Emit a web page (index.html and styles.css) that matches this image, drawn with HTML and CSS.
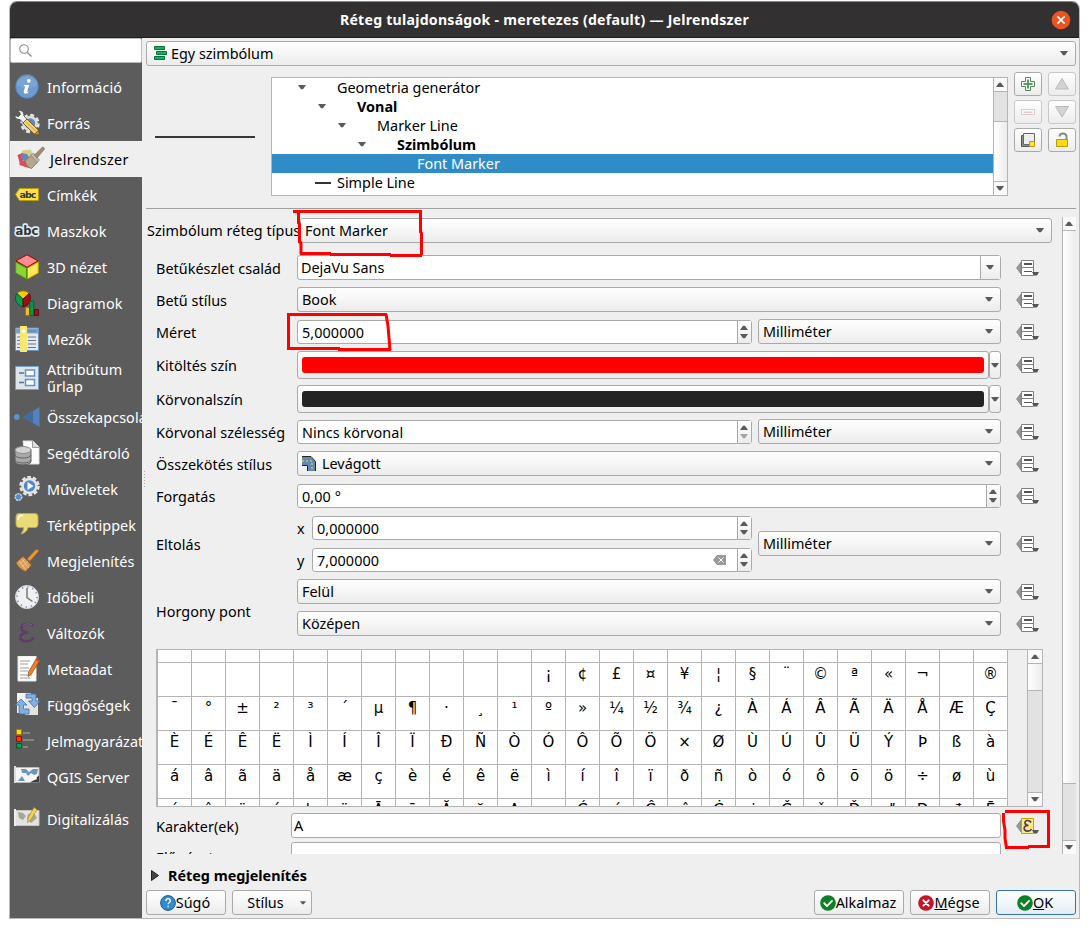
FILE: index.html
```html
<!DOCTYPE html>
<html lang="hu">
<head>
<meta charset="utf-8">
<title>Réteg tulajdonságok</title>
<link rel="stylesheet" href="styles.css">
</head>
<body>
<svg width="0" height="0" class="defs">
  <defs>
    <symbol id="down" viewBox="0 0 8 5"><path d="M0 0h8L5 4.2H3z" fill="#5b5b5b"/></symbol>
    <symbol id="up" viewBox="0 0 8 5"><path d="M0 5h8L5 .8H3z" fill="#5b5b5b"/></symbol>
    <symbol id="override" viewBox="0 0 23 16">
      <path d="M5 2.2V14L.6 8z" fill="#999" stroke="#808080" stroke-width=".8"/>
      <path d="M5.5.5h12v15h-12z" fill="#fff" stroke="#808080"/>
      <path d="M5 7.500h13" stroke="#808080"/><path d="M8 4h8" stroke="#555" stroke-width="2"/><path d="M8 11.5h8" stroke="#555"/>
      <path d="M16 12h7l-2 3.4h-3z" fill="#555"/>
    </symbol>
    <symbol id="ok" viewBox="0 0 16 16"><circle cx="8" cy="8" r="7.8" fill="#0d7f24"/><path d="M4.2 8.2l2.8 2.9 5-5.2" fill="none" stroke="#fff" stroke-width="1.9" stroke-linecap="round" stroke-linejoin="round"/></symbol>
  </defs>
</svg>
<div class="window">
  <header class="titlebar">
    <span class="title">Réteg tulajdonságok - meretezes (default) — Jelrendszer</span>
    <svg class="close" width="20" height="20" viewBox="0 0 20 20"><circle cx="10" cy="10" r="9.3" fill="#e95420"/><path d="M6.4 6.4l7.2 7.2m0-7.2l-7.2 7.2" stroke="#fff" stroke-width="1.6"/></svg>
  </header>
  <div class="body">
    <nav class="sidebar">
      <div class="search"><svg width="13" height="13" viewBox="0 0 13 13" fill="none" stroke="#8b8b8b"><circle cx="5" cy="5" r="4.3" stroke-width="1.1"/><path d="M8.2 8.2l4.3 4.3" stroke-width="1.3"/></svg></div>
      <div class="items">
        <div class="item"><svg width="26" height="26" viewBox="0 0 26 26"><circle cx="13" cy="13" r="11.4" fill="#6d9bd1" stroke="#4a78b5"/><path d="M2 11a11 11 0 0 1 22 0c-7 4-14 4-22 0z" fill="#8fb2dd" opacity=".4"/><circle cx="14.8" cy="6.8" r="1.9" fill="#fff"/><path d="M10.2 11h4.9l-2 7c.6.4 1.6-.3 2.2-1.1-.8 2.8-6.2 4.300-5.500.3l1.500-4.900h-1.700z" fill="#fff"/></svg><span>Információ</span></div>
        <div class="item"><svg width="26" height="26" viewBox="0 0 26 26"><circle cx="16" cy="13.500" r="8.500" fill="none" stroke="#e6e6e6" stroke-width="2.400" stroke-dasharray="3.900 2.775"/><circle cx="16" cy="13.500" r="6.500" fill="#5d89c0" stroke="#dcdcdc" stroke-width="2.600"/><path d="M3.500.5c4-.8 6.800 1.500 6.300 5.200l4.200 4.800-3.500 3.500-4.500-4.500C3.500 10 1 8.300.7 5.500l3.800 1 1.800-1.700-.6-2.600z" fill="#f2f2f2" stroke="#444" stroke-width=".8"/><path d="M9 13l4-4 11.500 11.300-4 4z" fill="#f2d27a" stroke="#6b5417" stroke-width=".9"/><path d="M12.500 12l9 9" stroke="#b58f3a" stroke-width=".8"/><path d="M20.500 24.300l4-4 .7 4.500z" fill="#bd9340" stroke="#6b5417" stroke-width=".6"/></svg><span>Forrás</span></div>
        <div class="item active"><svg width="30" height="26" viewBox="0 0 30 26"><path d="M6 5.500l9-1 2 6-5 2-6-2z" fill="#d9cd85"/><path d="M1.500 10l5-2 3 6-6 3z" fill="#d94857"/><path d="M5 8l6 1 3 5-5 3-4-4z" fill="#6688b9"/><path d="M3.500 15l7 1 5 6-3 1-9-3z" fill="#d9505c"/><path d="M9 15.500l7-5.500 6 7-6.500 6.500q-5-1-6.500-8z" fill="#b5a68f" stroke="#857453" stroke-width=".8"/><path d="M14.500 10l3-2 6 7-2.500 2.500z" fill="#bdb8aa" stroke="#807b70" stroke-width=".6"/><path d="M18.500 10l7.500-7.500c1-1 3.200.3 2.200 1.900L21 13z" fill="#a08d70" stroke="#7f7155" stroke-width=".7"/></svg><span>Jelrendszer</span></div>
        <div class="item"><svg width="26" height="26" viewBox="0 0 26 26"><path d="M1.500 12.500l4-6h19v12h-19z" fill="#fbe243" stroke="#b69b0c"/><text x="5.500" y="16" textLength="17" class="abc">abc</text></svg><span>Címkék</span></div>
        <div class="item"><svg width="26" height="26" viewBox="0 0 26 26"><text x="1.500" y="16.500" textLength="23" lengthAdjust="spacingAndGlyphs" class="abc mask">abc</text></svg><span>Maszkok</span></div>
        <div class="item"><svg width="26" height="26" viewBox="0 0 26 26" stroke-linejoin="round"><path d="M13 .8l11 6-11 6.500-11-6.500z" fill="#ff8e8f" stroke="#a40000"/><path d="M1.700 8l10.800 6v11L1.700 19z" fill="#89d537" stroke="#489500"/><path d="M24.300 8l-10.800 6v11l10.800-6z" fill="#fae759" stroke="#bd9a00"/></svg><span>3D nézet</span></div>
        <div class="item"><svg width="26" height="26" viewBox="0 0 26 26" stroke-width=".8"><path d="M9 9L3 3.500C6 0 12 0 15 3.500z" fill="#f7cd00" stroke="#a67d00"/><path d="M9 9L3 3.500C0 8 1 14 9 17z" fill="#0c9c50" stroke="#044f2a"/><path d="M9 9l6-5.500c4 5 0 12-6 13.500z" fill="#a40b15" stroke="#610007"/><path d="M11.500 17.500h4v8h-4z" fill="#ffbc13" stroke="#a76800"/><path d="M15.800 11h4v14.500h-4z" fill="#08964b" stroke="#02552a"/><path d="M20.500 19.500h4v6h-4z" fill="#9e1418" stroke="#5f0000"/></svg><span>Diagramok</span></div>
        <div class="item"><svg width="26" height="26" viewBox="0 0 26 26"><path d="M1.500 2h23v22.500h-23z" fill="#e3e9ee" stroke="#6d94bd"/><path d="M2 2.500h22v5H2z" fill="#7ca1cc"/><path d="M3 11h3m8 0h8M3 14.500h3m8 0h8M3 18h3m8 0h8M3 21.500h3m8 0h8M14 5h8" stroke="#607a92"/><path d="M6 0h7v26H6z" fill="#f7e871"/><circle cx="9.500" cy="5" r="1.800" fill="#fff"/></svg><span>Mezők</span></div>
        <div class="item tall"><svg width="26" height="26" viewBox="0 0 26 26"><path d="M1.500 1.500h23v23h-23z" fill="#dee5ea" stroke="#78a0c5"/><path d="M11.500 5h9v6h-9zm0 9.500h9v6h-9z" fill="#fff" stroke="#6991bd" stroke-width="1.500"/><path d="M5 8h5m-5 9.500h5" stroke="#54748d" stroke-width="1.700"/></svg><span>Attribútum<br>űrlap</span></div>
        <div class="item"><svg width="26" height="26" viewBox="0 0 26 26"><circle cx="2.800" cy="13" r="2.900" fill="#5e91cf"/><path d="M25.500 3v20L9 13z" fill="#5582b9"/><path d="M19 7v12l-10-6z" fill="#426ba5"/></svg><span>Összekapcsolás</span></div>
        <div class="item"><svg width="26" height="26" viewBox="0 0 26 26"><path d="M9 1h10l6 6v17H12z" fill="#fff" stroke="#ddd"/><path d="M18.500 1v6.500H25" fill="#ddd" stroke="#777" stroke-width=".7"/><path d="M1 9.500v12c0 4.500 16 4.500 16 0v-12z" fill="#a8a8a8" stroke="#626262"/><ellipse cx="9" cy="10" rx="8" ry="3.500" fill="#d2d2d2" stroke="#8b8b8b"/><path d="M1 15c0 4 16 4 16 0M1 20c0 4 16 4 16 0" fill="none" stroke="#646464"/></svg><span>Segédtároló</span></div>
        <div class="item"><svg width="26" height="26" viewBox="0 0 26 26"><circle cx="15.500" cy="10" r="9" fill="none" stroke="#e5e5e5" stroke-width="2.500" stroke-dasharray="3.700 2"/><circle cx="15.500" cy="10" r="7" fill="#5587c6" stroke="#e5e5e5" stroke-width="2.500"/><path d="M13.500 6l6 4-6 4z" fill="#fff"/><circle cx="4.500" cy="21" r="3.300" fill="#538bd0" stroke="#c9d5df" stroke-width="1.500" stroke-dasharray="2.200 .6"/></svg><span>Műveletek</span></div>
        <div class="item"><svg width="26" height="26" viewBox="0 0 26 26"><path d="M5 1.500h16q3 0 3 3v8q0 3-3 3h-7q-1 5-7 6.500 3-4 2.500-6.500H5q-3 0-3-3v-8q0-3 3-3z" fill="#eadb77" stroke="#bda848"/><path d="M4 8q0-5 5-4.500" stroke="#fff" stroke-width="1.500" fill="none"/></svg><span>Térképtippek</span></div>
        <div class="item"><svg width="26" height="26" viewBox="0 0 26 26"><path d="M13 11L21.500 2c1.500-1.500 4 .5 2.500 2L16 13z" fill="#ed9638" stroke="#b26514" stroke-width=".8"/><path d="M9 8.500l8.500 8.500-6 6.500Q5 21 2 15z" fill="#d99d57" stroke="#a16025" stroke-width=".8"/><path d="M5 13l7 9m-4-11l7 9m-9-4l5-5m-3 8l6-6" stroke="#f0c893" stroke-width=".8"/></svg><span>Megjelenítés</span></div>
        <div class="item"><svg width="26" height="26" viewBox="0 0 26 26"><circle cx="13" cy="13" r="11.500" fill="#eff0ef" stroke="#d6d6d6"/><circle cx="13" cy="13" r="10" fill="none" stroke="#6b95c6" stroke-width="1.700" stroke-dasharray="1.200 4.030"/><path d="M13 4v9.500l5.500 4" fill="none" stroke="#777" stroke-width="1.500"/></svg><span>Időbeli</span></div>
        <div class="item"><svg width="26" height="26" viewBox="0 0 26 26"><path d="M18.500 6.500C17.500 3 7 2 7.500 8.500q.7 3.500 6.500 4-8 .5-7.500 5C7 23 17.500 22 19.500 17.500" fill="none" stroke="#5f3b67" stroke-width="2.600"/><path d="M18 5Q12 2 9 6" fill="none" stroke="#82628b"/></svg><span>Változók</span></div>
        <div class="item"><svg width="26" height="26" viewBox="0 0 26 26"><path d="M4 0h18v25H4z" fill="#fff" stroke="#e2e2e2"/><path d="M6 5h10M6 8h8m-8 4h9m-9 3h8m-8 4h12m-12 3h10" stroke="#9b9b9b"/><path d="M22 3l3.500 2-8 13-3.500 2.500.5-4.500z" fill="#e8822c" stroke="#9b4b16" stroke-width=".7"/><path d="M21.500 3.500L23 2l3 2-1 1.700z" fill="#cf3f48"/></svg><span>Metaadat</span></div>
        <div class="item"><svg width="26" height="26" viewBox="0 0 26 26"><path d="M3 1h14v20H3z" fill="#f3f3f3"/><path d="M11 6h13v17H11z" fill="#e3e3e3"/><path d="M1 13l6-6 6 6H9.500v4H15v5H5v-9z" fill="#86b0dc" stroke="#3971ad" stroke-width=".8"/><path d="M12 2h10v7h4l-5.500 6.500L14.500 9H18V6h-6z" fill="#86b0dc" stroke="#3971ad" stroke-width=".8"/></svg><span>Függőségek</span></div>
        <div class="item"><svg width="26" height="26" viewBox="0 0 26 26"><path d="M2.500 1.500h5v5h-5z" fill="#ffd611" stroke="#a17c00"/><path d="M2.500 8.500h5v5h-5z" fill="#ff370c" stroke="#910c00"/><path d="M2.500 15.500h5v4.500h-5z" fill="#00a451" stroke="#005628"/><path d="M9 5h7m-7 7h11m-11 7h5" stroke="#929292" stroke-width="1.700"/></svg><span>Jelmagyarázat</span></div>
        <div class="item"><svg width="26" height="26" viewBox="0 0 26 26"><path d="M1 3.500h24v15H1z" fill="#f6f6f6" stroke="#bababa"/><path d="M7 5h5l3 3 4-3h5l-1 5-3 1-3-2-3 3-2-3-4 0zM4 17l4-5 3 5z" fill="#7095bc"/><path d="M16 18.500l9-7v7z" fill="#3b3d40"/><path d="M16 18l7-3-1-3-5 5z" fill="#fff"/><path d="M0 2h2v17H0z" fill="#dedede"/></svg><span>QGIS Server</span></div>
        <div class="item tall last"><svg width="26" height="26" viewBox="0 0 26 26"><path d="M1 6.500h24v15H1z" fill="#e3e3df" stroke="#c6c6c1"/><path d="M4 8l5 1 3 3-3 4-4-2zm10 2l6-1 3 5-6 5-4-4z" fill="#a4a59e"/><path d="M20 3.500l3 2-6 10-3.500 3 .8-5z" fill="#f4d64c" stroke="#a88c1d" stroke-width=".7"/><path d="M0 5h2v17H0z" fill="#eee"/></svg><span>Digitalizálás</span></div>
      </div>
    </nav>
    <main class="main">
      <div class="combo renderer"><svg width="13" height="15" viewBox="0 0 13 15" fill="#13b45d" stroke="#07713a"><path d="M.5.5h10v3H.5zM2.500 5.500h10v3h-10zM.5 10.500h10v3H.5z"/></svg><span>Egy szimbólum</span><svg class="arr" width="8" height="5"><use href="#down"/></svg></div>
      <section class="symbols">
        <div class="preview"><div class="stroke"></div></div>
        <div class="tree">
          <div class="nodes">
            <div class="node l0"><svg width="8" height="5"><use href="#down"/></svg><span>Geometria generátor</span></div>
            <div class="node l1"><svg width="8" height="5"><use href="#down"/></svg><b>Vonal</b></div>
            <div class="node l2"><svg width="8" height="5"><use href="#down"/></svg><span>Marker Line</span></div>
            <div class="node l3"><svg width="8" height="5"><use href="#down"/></svg><b>Szimbólum</b></div>
            <div class="node l4 selected"><span>Font Marker</span></div>
            <div class="node l5"><i class="dash"></i><span>Simple Line</span></div>
          </div>
          <div class="vbar"><div class="cap"><svg width="8" height="5"><use href="#up"/></svg></div><div class="groove short"></div><div class="thumb"></div><div class="cap"><svg width="8" height="5"><use href="#down"/></svg></div></div>
        </div>
        <div class="tools">
          <div class="tool"><svg width="16" height="16" viewBox="0 0 16 16"><path d="M5.500 1.500h5v4h4v5h-4v4h-5v-4h-4v-5h4z" fill="#fff" stroke="#4e8a55"/><path d="M7 3.500h2V7h3.500v2H9v3.500H7V9H3.500V7H7z" fill="#5c9a62"/></svg></div>
          <div class="tool off"><svg width="16" height="16" viewBox="0 0 16 16"><path d="M8 2.500l6.500 10.500h-13z" fill="#d3d3d3" stroke="#bbb"/></svg></div>
          <div class="tool off"><svg width="16" height="16" viewBox="0 0 16 16"><path d="M1.500 5.500h13v5h-13z" fill="#fff" stroke="#dfc7c7"/><path d="M3.500 7.500h9v1.500h-9z" fill="#e3c6c8"/></svg></div>
          <div class="tool off"><svg width="16" height="16" viewBox="0 0 16 16"><path d="M1.500 2.500h13L8 13z" fill="#d3d3d3" stroke="#bbb"/></svg></div>
          <div class="tool"><svg width="16" height="16" viewBox="0 0 16 16"><path d="M1.500 3.500h10v11h-10z" fill="#8b9082" stroke="#555"/><path d="M3.500 1.500h11v11h-11z" fill="#eee" stroke="#666"/><path d="M9.500 9.500h5v5h-5z" fill="#f7e05a" stroke="#c49a00"/></svg></div>
          <div class="tool"><svg width="16" height="16" viewBox="0 0 16 16"><path d="M5.500 4.500Q5.500 1.500 9 1.500T12.500 5v3" fill="none" stroke="#888" stroke-width="2"/><path d="M2.500 7.500h11v7h-11z" fill="#f8dc18" stroke="#c09b00"/></svg></div>
        </div>
      </section>
      <section class="props">
        <div class="form">
          <div class="row type"><label>Szimbólum réteg típus</label><div class="combo"><span>Font Marker</span><svg class="arr" width="8" height="5"><use href="#down"/></svg></div></div>
          <div class="row"><label>Betűkészlet család</label><div class="edit"><span>DejaVu Sans</span><div class="drop"><svg width="8" height="5"><use href="#down"/></svg></div></div><svg class="ovr"><use href="#override"/></svg></div>
          <div class="row"><label>Betű stílus</label><div class="combo"><span>Book</span><svg class="arr" width="8" height="5"><use href="#down"/></svg></div><svg class="ovr"><use href="#override"/></svg></div>
          <div class="row"><label>Méret</label><div class="spin"><span>5,000000</span><div class="steps"><svg width="8" height="5"><use href="#up"/></svg><svg width="8" height="5"><use href="#down"/></svg></div></div><div class="combo unit"><span>Milliméter</span><svg class="arr" width="8" height="5"><use href="#down"/></svg></div><svg class="ovr"><use href="#override"/></svg></div>
          <div class="row color"><label>Kitöltés szín</label><div class="swatch"><div class="fill red"></div></div><div class="mini"><svg width="8" height="5"><use href="#down"/></svg></div><svg class="ovr"><use href="#override"/></svg></div>
          <div class="row color"><label>Körvonalszín</label><div class="swatch"><div class="fill dark"></div></div><div class="mini"><svg width="8" height="5"><use href="#down"/></svg></div><svg class="ovr"><use href="#override"/></svg></div>
          <div class="row"><label>Körvonal szélesség</label><div class="spin"><span>Nincs körvonal</span><div class="steps min"><svg width="8" height="5"><use href="#up"/></svg><svg width="8" height="5"><use href="#down"/></svg></div></div><div class="combo unit"><span>Milliméter</span><svg class="arr" width="8" height="5"><use href="#down"/></svg></div><svg class="ovr"><use href="#override"/></svg></div>
          <div class="row"><label>Összekötés stílus</label><div class="combo"><svg class="join" width="15" height="15" viewBox="0 0 15 15"><path d="M0 1h9l5 5v9H6V9H0z" fill="#6488b5"/><path d="M0 .5h9l4.500 5V15M0 9.500h5.500V15" fill="none" stroke="#222"/><path d="M0 5h10v9" fill="none" stroke="#d9c33e" stroke-width="1.500" stroke-dasharray="2 2"/></svg><span>Levágott</span><svg class="arr" width="8" height="5"><use href="#down"/></svg></div><svg class="ovr"><use href="#override"/></svg></div>
          <div class="row"><label>Forgatás</label><div class="spin"><span>0,00 °</span><div class="steps"><svg width="8" height="5"><use href="#up"/></svg><svg width="8" height="5"><use href="#down"/></svg></div></div><svg class="ovr"><use href="#override"/></svg></div>
          <div class="row offset"><label>Eltolás</label><div class="pair">
            <div class="axis"><em>x</em><div class="spin"><span>0,000000</span><div class="steps"><svg width="8" height="5"><use href="#up"/></svg><svg width="8" height="5"><use href="#down"/></svg></div></div></div>
            <div class="axis"><em>y</em><div class="spin"><span>7,000000</span><svg class="clear" width="13" height="10" viewBox="0 0 13 10"><path d="M4 0h9v10H4L0 5z" fill="#999"/><path d="M5.500 2.500l5 5m0-5l-5 5" stroke="#fff"/></svg><div class="steps"><svg width="8" height="5"><use href="#up"/></svg><svg width="8" height="5"><use href="#down"/></svg></div></div></div>
          </div><div class="combo unit"><span>Milliméter</span><svg class="arr" width="8" height="5"><use href="#down"/></svg></div><svg class="ovr"><use href="#override"/></svg></div>
          <div class="row anchor"><label>Horgony pont</label><div class="stack">
            <div class="line"><div class="combo"><span>Felül</span><svg class="arr" width="8" height="5"><use href="#down"/></svg></div><svg class="ovr"><use href="#override"/></svg></div>
            <div class="line"><div class="combo"><span>Középen</span><svg class="arr" width="8" height="5"><use href="#down"/></svg></div><svg class="ovr"><use href="#override"/></svg></div>
          </div></div>
          <div class="charmap">
            <div class="chars">
              <i></i><i></i><i></i><i></i><i></i><i></i><i></i><i></i><i></i><i></i><i></i><i></i><i></i><i></i><i></i><i></i><i></i><i></i><i></i><i></i><i></i><i></i><i></i><i></i><i></i>
              <i></i><i></i><i></i><i></i><i></i><i></i><i></i><i></i><i></i><i></i><i></i><i>¡</i><i>¢</i><i>£</i><i>¤</i><i>¥</i><i>¦</i><i>§</i><i>¨</i><i>©</i><i>ª</i><i>«</i><i>¬</i><i></i><i>®</i>
              <i>¯</i><i>°</i><i>±</i><i>²</i><i>³</i><i>´</i><i>µ</i><i>¶</i><i>·</i><i>¸</i><i>¹</i><i>º</i><i>»</i><i>¼</i><i>½</i><i>¾</i><i>¿</i><i>À</i><i>Á</i><i>Â</i><i>Ã</i><i>Ä</i><i>Å</i><i>Æ</i><i>Ç</i>
              <i>È</i><i>É</i><i>Ê</i><i>Ë</i><i>Ì</i><i>Í</i><i>Î</i><i>Ï</i><i>Ð</i><i>Ñ</i><i>Ò</i><i>Ó</i><i>Ô</i><i>Õ</i><i>Ö</i><i>×</i><i>Ø</i><i>Ù</i><i>Ú</i><i>Û</i><i>Ü</i><i>Ý</i><i>Þ</i><i>ß</i><i>à</i>
              <i>á</i><i>â</i><i>ã</i><i>ä</i><i>å</i><i>æ</i><i>ç</i><i>è</i><i>é</i><i>ê</i><i>ë</i><i>ì</i><i>í</i><i>î</i><i>ï</i><i>ð</i><i>ñ</i><i>ò</i><i>ó</i><i>ô</i><i>õ</i><i>ö</i><i>÷</i><i>ø</i><i>ù</i>
              <i>ú</i><i>û</i><i>ü</i><i>ý</i><i>þ</i><i>ÿ</i><i>Ā</i><i>ā</i><i>Ă</i><i>ă</i><i>Ą</i><i>ą</i><i>Ć</i><i>ć</i><i>Ĉ</i><i>ĉ</i><i>Ċ</i><i>ċ</i><i>Č</i><i>č</i><i>Ď</i><i>ď</i><i>Đ</i><i>đ</i><i>Ē</i>
            </div>
            <div class="vbar"><div class="cap"><svg width="8" height="5"><use href="#up"/></svg></div><div class="thumb small"></div><div class="groove"></div><div class="cap"><svg width="8" height="5"><use href="#down"/></svg></div></div>
          </div>
          <div class="row chr"><label>Karakter(ek)</label><div class="edit"><span>A</span></div><svg class="ovr" viewBox="0 0 23 16"><path d="M5 2.200V14L.6 8z" fill="#999" stroke="#808080" stroke-width=".8"/><path d="M5.500.5h12v15h-12z" fill="#fbeb7e" stroke="#c8a300"/><path d="M15 4.500C13.500 1.500 8.500 2 9 5q.4 2.300 3.500 2.500-4.500 0-4.300 3c.3 3.500 6 3.200 7.300.5" fill="none" stroke="#583a5c" stroke-width="1.700"/><path d="M16 12h7l-2 3.400h-3z" fill="#555"/></svg></div>
          <div class="row next"><label>Előnézet</label><div class="edit"></div></div>
        </div>
        <div class="vbar"><div class="cap"><svg width="8" height="5"><use href="#up"/></svg></div><div class="thumb"></div><div class="groove end"></div><div class="cap"><svg width="8" height="5"><use href="#down"/></svg></div></div>
      </section>
      <div class="rendering"><svg width="8" height="11" viewBox="0 0 8 11"><path d="M.5.5L7.500 5.500l-7 5z" fill="#444" stroke="#222"/></svg><b>Réteg megjelenítés</b></div>
      <footer class="buttons">
        <div class="btn"><svg width="16" height="16" viewBox="0 0 16 16"><circle cx="8" cy="8" r="7.400" fill="#3489ce" stroke="#1b5b96"/><path d="M5.800 6q.2-2.300 2.300-2.300T10.300 6q0 1-1.200 1.700-1 .6-1 1.600m0 1.500v1.400" fill="none" stroke="#fff" stroke-width="1.300"/></svg><span>Súgó</span></div>
        <div class="btn style"><span>Stílus</span><svg width="6" height="4"><use href="#down"/></svg></div>
        <div class="btn apply"><svg width="16" height="16"><use href="#ok"/></svg><span>Alkalmaz</span></div>
        <div class="btn cancel"><svg width="16" height="16" viewBox="0 0 16 16"><circle cx="8" cy="8" r="7.800" fill="#c4162a"/><path d="M5.400 5.400l5.200 5.200m0-5.200l-5.200 5.200" stroke="#fff" stroke-width="2" stroke-linecap="round"/></svg><span><u>M</u>égse</span></div>
        <div class="btn default"><svg width="16" height="16"><use href="#ok"/></svg><span><u>O</u>K</span></div>
      </footer>
    </main>
  </div>
</div>
<div class="grip"></div>
<svg class="marks" width="1089" height="928" fill="none" stroke="#f00" stroke-width="3">
  <path d="M293 211.500h129M420.500 210v22l1 1v22M298.500 211v12l1 1v18l1.500 1v11M300 253.500h31M330 254.500h61M390 255.500h32"/>
  <path d="M288.500 313v37M287 314.500h100M386 314l2 12 1 12 1 12M288 348.500h52M338 349.500h53"/>
  <path d="M1005 811.500h45M1048.500 810v38M1003.500 813v8l1.500 9v8l1.500 10M1005 847.500h24M1028 846.500h22"/>
</svg>
</body>
</html>
```

FILE: styles.css
```css
* { box-sizing: border-box; }
body { margin: 0; width: 1089px; height: 928px; overflow: hidden; position: relative; background: #fff; font: 14.4px/20px "Noto Sans", "Open Sans", sans-serif; color: #000; padding: 1px 0 0 9px; }
svg { display: block; flex: none; }
i, em { font-style: normal; }
span, b, label { white-space: nowrap; }
.defs { position: absolute; }
.window { width: 1071px; height: 918px; border: 1px solid #b9b9b9; border-top-color: #888; border-radius: 8px 8px 0 0; background: #efefef; overflow: hidden; }
.titlebar { height: 36px; background: #323031; border-bottom: 1px solid #1f1e1e; display: flex; align-items: center; padding: 0 8px 0 28px; color: #fff; }
.title { flex: 1; text-align: center; font-weight: 700; font-size: 14.1px; letter-spacing: .26px; }
.body { display: flex; height: 880px; }
.sidebar { width: 132px; background: #5c5c5c; color: #fff; overflow: hidden; flex: none; }
.search { height: 25px; background: #fff; border: 1px solid #bbb; border-radius: 2px; padding: 5px 8px; }
.items { padding-top: 6px; }
.item { height: 36px; display: flex; align-items: center; gap: 7px; padding-left: 4px; line-height: 17px; letter-spacing: .08px; }
.item.tall { height: 42px; }
.item.last { padding-top: 6px; }
.item.last svg { margin-top: -4px; }
.item.active { background: #efefef; color: #000; padding-left: 6px; gap: 4px; letter-spacing: .35px; }
.item.active svg { margin-top: -2px; }
.abc { font: bold 9.5px "DejaVu Sans", sans-serif; fill: #333; }
.mask { font-size: 12.5px; stroke: #dcebf5; stroke-width: 3.6px; stroke-linejoin: round; paint-order: stroke; }
.main { flex: 1; min-width: 0; padding: 3px 3px 0 4px; }
.combo, .btn, .tool, .swatch, .mini { border: 1px solid #aaa; border-radius: 3px; background: linear-gradient(#fff, #ececec); }
.combo { height: 25px; display: flex; align-items: center; padding: 0 7px 0 4px; flex: 1; }
.arr { margin-left: auto; }
.renderer { padding-left: 7px; }
.renderer span { margin-left: 4px; }
.symbols { height: 143px; border-bottom: 1px solid #a0a0a0; display: flex; padding-top: 6px; }
.preview { width: 125px; padding: 64px 0 0 9px; }
.stroke { width: 100px; height: 2px; background: #383838; }
.tree { width: 737px; height: 119px; margin-top: 5px; border: 1px solid #b4b4b4; background: #fff; display: flex; }
.nodes { flex: 1; }
.node { height: 19px; display: flex; align-items: center; gap: 31px; line-height: 19px; }
.l0 { padding-left: 26px; } .l1 { padding-left: 46px; } .l2 { padding-left: 66px; } .l3 { padding-left: 86px; } .l4 { padding-left: 145px; }
.l5 { padding-left: 43px; gap: 6px; }
.selected { background: #308cc6; color: #fff; }
.dash { width: 16px; height: 2px; background: #333; }
.vbar { width: 14px; border-left: 1px solid #b4b4b4; display: flex; flex-direction: column; background: linear-gradient(90deg, #fff, #ececec); flex: none; }
.cap { height: 14px; flex: none; display: flex; align-items: center; justify-content: center; background: #fafafa; border-bottom: 1px solid #b4b4b4; padding-right: 1px; }
.cap:last-child { border-bottom: 0; border-top: 1px solid #b4b4b4; }
.thumb { flex: 1; }
.thumb.small { flex: none; height: 27px; border-bottom: 1px solid #b4b4b4; }
.groove { flex: 1; background: #e2e2e2; }
.groove.short { flex: none; height: 30px; border-bottom: 1px solid #b4b4b4; }
.groove.end { flex: none; height: 57px; border-top: 1px solid #b4b4b4; }
.tools { margin-left: 6px; display: grid; grid-template-columns: 28px 28px; grid-template-rows: 24px 24px 24px; gap: 4px 6px; }
.tool { display: flex; align-items: center; justify-content: center; }
.tool.off { border-color: #c8c8c8; }
.props { height: 637px; margin-top: 8px; display: flex; overflow: hidden; }
.form { width: 916px; overflow: hidden; }
.row { height: 32px; display: flex; align-items: flex-start; padding-left: 10px; }
.row label { width: 141px; line-height: 34px; flex: none; letter-spacing: .04px; }
.row.type { height: 35px; padding-left: 1px; padding-right: 10px; }
.row.type label { width: 153px; line-height: 28px; }
.row .combo, .swatch, .mini, .row > .edit { margin-top: 3px; }
.row.type .combo { margin-top: 1px; }
.ovr { width: 23px; height: 16px; margin: 8px 23px 0 15px; }
.unit { flex: none; width: 243px; margin-left: 6px; }
.edit, .spin { flex: 1; background: #fff; border: 1px solid #aaa; border-radius: 3px; display: flex; align-items: center; justify-content: space-between; padding-left: 3px; }
.edit { height: 25px; }
.chr .edit { padding-left: 2px; }
.spin { height: 24px; margin-top: 4px; padding-left: 4px; }
.spin span { padding-top: 2px; letter-spacing: .08px; }
.drop { width: 20px; height: 23px; border-left: 1px solid #aaa; background: linear-gradient(#fff, #ececec); display: flex; align-items: center; justify-content: center; padding-right: 1px; }
.steps { width: 14px; height: 22px; border-left: 1px solid #aaa; background: linear-gradient(#fff, #ececec); display: flex; flex-direction: column; align-items: center; justify-content: center; gap: 4px; padding-right: 1px; }
.steps.min svg:last-child { opacity: .5; }
.clear { margin-left: auto; margin-right: 11px; }
.join { margin-right: 5px; }
.row.color { height: 34px; }
.row.color label { line-height: 36px; }
.color .ovr { margin-top: 9px; }
.swatch { flex: 1; height: 28px; padding: 5px 4px; }
.fill { height: 16px; border-radius: 3px; }
.red { background: #f00; } .dark { background: #232323; }
.mini { width: 12px; height: 28px; display: flex; align-items: center; justify-content: center; }
.row.offset, .row.anchor { height: 64px; }
.row.offset label { line-height: 66px; }
.offset .unit.combo { margin-top: 19px; }
.offset .ovr { margin-top: 24px; }
.pair, .stack { flex: 1; }
.axis { height: 32px; display: flex; }
.axis em { width: 15px; line-height: 33px; }
.line { height: 32px; display: flex; }
.row.anchor label { line-height: 71px; }
.charmap { margin: 9px 19px 0 10px; height: 158px; border: 1px solid #b4b4b4; border-left-width: 2px; display: flex; justify-content: space-between; }
.charmap .vbar { width: 15px; }
.chars { display: grid; grid-template-columns: repeat(25, 34px); grid-template-rows: 13px repeat(4, 34px) 34px; overflow: hidden; font: 15px/22px "DejaVu Sans", sans-serif; }
.chars i { background: #fff; border: solid #b4b4b4; border-width: 0 1px 1px 0; text-align: center; overflow: hidden; }
.row.chr { padding-top: 3px; }
.row.chr label, .row.next label { width: 135px; }
.row.next label { line-height: 38px; }
.next .edit { margin-right: 61px; }
.rendering { height: 36px; display: flex; align-items: center; gap: 9px; padding: 7px 0 0 5px; }
.buttons { display: flex; gap: 6px; }
.btn { width: 80px; height: 25px; display: flex; align-items: center; justify-content: center; padding-right: 2px; }
.style { gap: 16px; padding-left: 11px; }
.apply { width: 90px; margin-left: auto; }
.default { border-color: #3574a8; background: linear-gradient(#fff, #e4edf3); }
.grip { position: absolute; left: 144px; top: 471px; width: 1px; height: 16px; background: repeating-linear-gradient(#aaa 0 1px, transparent 1px 3px); }
.marks { position: absolute; left: 0; top: 0; }
```
